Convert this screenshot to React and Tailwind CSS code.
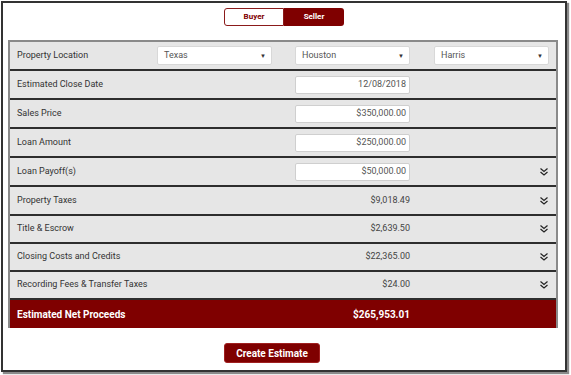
import React from "react";

const Chevrons = () => (
  <svg width="10" height="10" viewBox="0 0 10 10" className="block">
    <path d="M1.5 1.5 L5 4.5 L8.5 1.5" fill="none" stroke="#222" strokeWidth="1.2" />
    <path d="M1.5 5 L5 8 L8.5 5" fill="none" stroke="#222" strokeWidth="1.2" />
  </svg>
);

const Select = ({ value }) => (
  <div className="w-[115px] h-[19px] bg-white rounded-[2px] border border-[#d8d8d8] flex items-center justify-between pl-[6px] pr-[5px] text-[9px] text-[#555]">
    <span>{value}</span>
    <span className="text-[6px] text-[#333]">▼</span>
  </div>
);

const Input = ({ value }) => (
  <div className="w-[115px] h-[18px] bg-white rounded-[2px] border border-[#cfcfcf] flex items-center justify-end pr-[3px] text-[9px] text-[#555]">
    {value}
  </div>
);

const Row = ({ label, children, chevron, h }) => (
  <div className={`flex items-center ${h} bg-[#e6e6e6] pl-[7px] pr-[7px] border-b-2 border-[#2e2e2e]`}>
    <div className="w-[140px] text-[9px] text-[#333]">{label}</div>
    {children}
    <div className="ml-auto">{chevron && <Chevrons />}</div>
  </div>
);

const ValueRow = ({ label, value, input, chevron, h = "h-[29px]" }) => (
  <Row label={label} chevron={chevron} h={h}>
    <div className="w-[138px]" />
    {input ? (
      <Input value={value} />
    ) : (
      <div className="w-[115px] text-right text-[9px] text-[#444]">{value}</div>
    )}
  </Row>
);

export default function App() {
  return (
    <div className="w-[571px] h-[375px] bg-white pt-[1px] pl-[1px]" style={{ fontFamily: "Roboto, 'Liberation Sans', sans-serif" }}>
      <div className="w-[566px] h-[371px] border-2 border-[#333] shadow-[2px_2px_1px_#8a8a8a] bg-white flex flex-col pt-[5px] px-[5px]">
        <div className="flex self-center">
          <div className="w-[60px] h-[18px] border border-[#8b1a1a] rounded-l-[3px] bg-white flex items-center justify-center text-[8px] font-bold text-[#7f0000]">
            Buyer
          </div>
          <div className="w-[60px] h-[18px] rounded-r-[3px] bg-[#7f0000] flex items-center justify-center text-[8px] font-bold text-white">
            Seller
          </div>
        </div>
        <div className="mt-[14px] w-[550px] border-x-2 border-t-2 border-[#8a8a8a]">
          <div className="flex items-center h-[29px] bg-[#e6e6e6] pl-[7px] pr-[7px] border-b-2 border-[#2e2e2e]">
            <div className="w-[140px] text-[9px] text-[#333]">Property Location</div>
            <div className="w-[138px]"><Select value="Texas" /></div>
            <div className="w-[139px]"><Select value="Houston" /></div>
            <Select value="Harris" />
          </div>
          <ValueRow label="Estimated Close Date" value="12/08/2018" input />
          <ValueRow label="Sales Price" value="$350,000.00" input />
          <ValueRow label="Loan Amount" value="$250,000.00" input />
          <ValueRow label="Loan Payoff(s)" value="$50,000.00" input chevron />
          <ValueRow label="Property Taxes" value="$9,018.49" chevron />
          <ValueRow label="Title & Escrow" value="$2,639.50" chevron h="h-[28px]" />
          <ValueRow label="Closing Costs and Credits" value="$22,365.00" chevron h="h-[28px]" />
          <ValueRow label="Recording Fees & Transfer Taxes" value="$24.00" chevron h="h-[28px]" />
          <div className="flex items-center h-[28px] bg-[#7f0000] pl-[7px] text-white font-bold text-[10px]">
            <div className="w-[278px]">Estimated Net Proceeds</div>
            <div className="w-[115px] text-right">$265,953.01</div>
          </div>
        </div>
        <div className="mt-[15px] ml-[216px] w-[96px] h-[20px] rounded-[3px] bg-[#7f0000] border border-[#a02020] flex items-center justify-center text-white font-bold text-[10px]">
          Create Estimate
        </div>
      </div>
    </div>
  );
}
